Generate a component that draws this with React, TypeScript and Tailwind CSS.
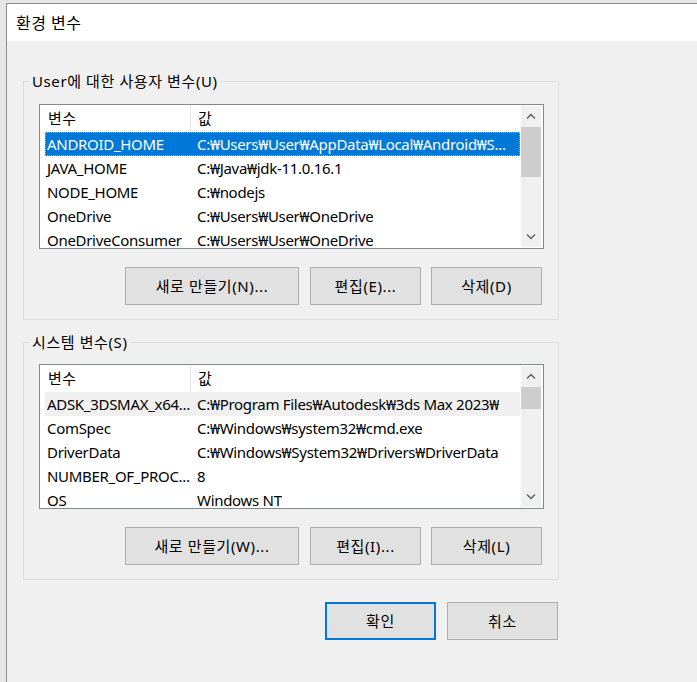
import type { ReactNode } from "react";

type EnvRow = [string, string];

const USER_VARS: EnvRow[] = [
  ["ANDROID_HOME", "C:₩Users₩User₩AppData₩Local₩Android₩S..."],
  ["JAVA_HOME", "C:₩Java₩jdk-11.0.16.1"],
  ["NODE_HOME", "C:₩nodejs"],
  ["OneDrive", "C:₩Users₩User₩OneDrive"],
  ["OneDriveConsumer", "C:₩Users₩User₩OneDrive"],
];

const SYSTEM_VARS: EnvRow[] = [
  ["ADSK_3DSMAX_x64...", "C:₩Program Files₩Autodesk₩3ds Max 2023₩"],
  ["ComSpec", "C:₩Windows₩system32₩cmd.exe"],
  ["DriverData", "C:₩Windows₩System32₩Drivers₩DriverData"],
  ["NUMBER_OF_PROC...", "8"],
  ["OS", "Windows NT"],
];

function Chevron({ up }: { up?: boolean }) {
  return (
    <svg width="10" height="7" viewBox="0 0 10 7" className="text-[#606060]">
      <path
        d={up ? "M1 5.5 L5 1.5 L9 5.5" : "M1 1.5 L5 5.5 L9 1.5"}
        fill="none"
        stroke="currentColor"
        strokeWidth="1.5"
      />
    </svg>
  );
}

function VarList({ rows, active, thumb }: { rows: EnvRow[]; active: boolean; thumb: number }) {
  return (
    <div className="flex h-[145px] w-[505px] overflow-hidden border border-[#828790] bg-white">
      <div className="flex w-[481px] flex-col">
        <div className="flex h-[27px] shrink-0 items-center tracking-[0.5px]">
          <div className="flex h-full w-[151px] items-center border-r border-[#e5e5e5] pl-[8px]">변수</div>
          <div className="pl-[7px]">값</div>
        </div>
        {rows.map(([name, value], i) => {
          const selected = i === 0;
          let cls = "ml-[5px] flex h-[24px] w-[475px] shrink-0 items-center tracking-[-0.3px]";
          if (selected && active) cls += " bg-[#0078d7] text-white outline outline-1 -outline-offset-1 outline-dotted outline-[#d9a05b]";
          else if (selected) cls += " bg-[#f0f0f0]";
          return (
            <div key={name} className={cls}>
              <div className="w-[145px] shrink-0 overflow-hidden whitespace-nowrap pl-[2px]">{name}</div>
              <div className="overflow-hidden whitespace-nowrap pl-[7px]">{value}</div>
            </div>
          );
        })}
      </div>
      <div className="my-[1px] ml-[1px] mr-[2px] flex w-[20px] flex-col bg-[#f0f0f0]">
        <div className="flex h-[21px] shrink-0 items-center justify-center">
          <Chevron up />
        </div>
        <div className="flex-1">
          <div className="w-full bg-[#cdcdcd]" style={{ height: thumb }} />
        </div>
        <div className="flex h-[21px] shrink-0 items-center justify-center">
          <Chevron />
        </div>
      </div>
    </div>
  );
}

function Button({ children, wide, primary }: { children: ReactNode; wide?: boolean; primary?: boolean }) {
  return (
    <button
      className={`flex h-[38px] items-center justify-center bg-[#e1e1e1] tracking-[0.6px] text-black ${
        wide ? "w-[174px]" : "w-[111px]"
      } ${primary ? "border-2 border-[#0078d7]" : "border border-[#adadad]"}`}
    >
      {children}
    </button>
  );
}

function Group({ title, children }: { title: string; children: ReactNode }) {
  return (
    <fieldset className="m-0 w-[536px] border border-[#dcdcdc] p-0">
      <legend className="ml-[6px] h-[18px] px-[2px] leading-[18px] tracking-[0.6px]">{title}</legend>
      <div className="pl-[15px] pr-[14px] pb-[14px]">{children}</div>
    </fieldset>
  );
}

export default function App() {
  return (
    <div
      className="h-[682px] w-[697px] overflow-hidden bg-[#e6e6e6] pl-[6px] pt-[3px] text-[15px] text-black"
      style={{ fontFamily: '"Noto Sans", "Noto Sans CJK KR", sans-serif' }}
    >
      <div className="flex h-full flex-col border-l border-t border-[#8c8c8c] bg-[#f0f0f0]">
        <div className="flex h-[37px] shrink-0 items-center bg-white pl-[9px] text-[16px] tracking-[0.5px]">환경 변수</div>
        <div className="pl-[16px] pt-[31px]">
          <Group title="User에 대한 사용자 변수(U)">
            <div className="mt-[14px]">
              <VarList rows={USER_VARS} active thumb={50} />
            </div>
            <div className="mt-[18px] flex justify-end gap-[11px] pr-[2px]">
              <Button wide>새로 만들기(N)...</Button>
              <div className="flex gap-[10px]">
                <Button>편집(E)...</Button>
                <Button>삭제(D)</Button>
              </div>
            </div>
          </Group>
          <div className="mt-[13px]">
            <Group title="시스템 변수(S)">
              <div className="mt-[13px]">
                <VarList rows={SYSTEM_VARS} active={false} thumb={22} />
              </div>
              <div className="mt-[18px] flex justify-end gap-[11px] pr-[2px]">
                <Button wide>새로 만들기(W)...</Button>
                <div className="flex gap-[10px]">
                  <Button>편집(I)...</Button>
                  <Button>삭제(L)</Button>
                </div>
              </div>
            </Group>
          </div>
          <div className="mt-[22px] flex w-[536px] justify-end gap-[11px] pr-[1px]">
            <Button primary>확인</Button>
            <Button>취소</Button>
          </div>
        </div>
      </div>
    </div>
  );
}
